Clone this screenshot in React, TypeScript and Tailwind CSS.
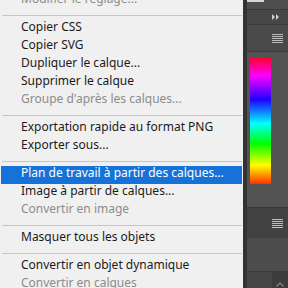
import React from 'react';

type Entry =
  | { kind: 'item'; label: string; disabled?: boolean; active?: boolean }
  | { kind: 'sep' };

const entries: Entry[] = [
  { kind: 'item', label: 'Modifier le réglage...', disabled: true },
  { kind: 'sep' },
  { kind: 'item', label: 'Copier CSS' },
  { kind: 'item', label: 'Copier SVG' },
  { kind: 'item', label: 'Dupliquer le calque...' },
  { kind: 'item', label: 'Supprimer le calque' },
  { kind: 'item', label: "Groupe d'après les calques...", disabled: true },
  { kind: 'sep' },
  { kind: 'item', label: 'Exportation rapide au format PNG' },
  { kind: 'item', label: 'Exporter sous...' },
  { kind: 'sep' },
  { kind: 'item', label: 'Plan de travail à partir des calques...', active: true },
  { kind: 'item', label: 'Image à partir de calques...' },
  { kind: 'item', label: 'Convertir en image', disabled: true },
  { kind: 'sep' },
  { kind: 'item', label: 'Masquer tous les objets' },
  { kind: 'sep' },
  { kind: 'item', label: 'Convertir en objet dynamique' },
  { kind: 'item', label: 'Convertir en calques', disabled: true },
];

function Hamburger() {
  return (
    <div className="flex flex-col gap-[1px] w-[11px]">
      <div className="h-px bg-[#bdbdbd]" />
      <div className="h-px bg-[#bdbdbd]" />
      <div className="h-px bg-[#bdbdbd]" />
      <div className="h-px bg-[#bdbdbd]" />
      <div className="h-px bg-[#bdbdbd]" />
    </div>
  );
}

export default function App() {
  return (
    <div
      className="flex w-[288px] h-[288px] overflow-hidden bg-[#535353]"
      style={{ fontFamily: '"Noto Sans", "Open Sans", sans-serif' }}
    >
      {/* Context menu */}
      <div className="w-[243px] shrink-0 bg-[#f0f0f0] px-[1px]">
        <div className="-mt-[8px]">
          {entries.map((e, i) =>
            e.kind === 'sep' ? (
              <div key={i} className="h-[10px] flex items-center pl-[1px]">
                <div className="w-full h-px bg-[#c6c6c6]" />
              </div>
            ) : (
              <div
                key={i}
                className={`h-[18px] pl-[20px] text-[12px] leading-[14px] whitespace-nowrap ${
                  e.active
                    ? 'bg-[#1672d8] text-white'
                    : e.disabled
                    ? 'text-[#8c8c8c]'
                    : 'text-[#1b1b1b]'
                }`}
              >
                {e.label}
              </div>
            )
          )}
        </div>
      </div>
      <div className="w-[4px] shrink-0 bg-[#333333]" />

      {/* Side panel */}
      <div className="flex-1 flex flex-col">
        <div className="h-[10px] bg-[#4e4e4e] border-b border-[#3a3a3a]">
          <div className="w-[17px] h-[2px] bg-[#d6d6d6]" />
        </div>
        <div className="h-[15px] bg-[#474747] border-b border-[#3b3b3b] flex items-center justify-end pr-[8px]">
          <svg width="8" height="6" viewBox="0 0 8 6">
            <path d="M0 0 L3 3 L0 6 Z M4 0 L7 3 L4 6 Z" fill="#cfcfcf" />
          </svg>
        </div>
        <div className="h-[27px] bg-[#4a4a4a] border-b border-[#3a3a3a] flex items-center justify-end pr-[5px]">
          <Hamburger />
        </div>
        <div className="h-[155px] bg-[#535353] pl-[3px] pt-[6px]">
          <div className="w-[21px] h-[126px] bg-[linear-gradient(to_bottom,#ff0030_0%,#ff00ff_14%,#2000ff_33%,#00ffff_52%,#00ff00_68%,#ffff00_85%,#ff3000_100%)]" />
        </div>
        <div className="h-[31px] bg-[#424242] border-t border-[#383838] flex items-center justify-end pr-[5px]">
          <Hamburger />
        </div>
        <div className="h-[34px] bg-[#4c4c4c] border-b border-[#3a3a3a]" />
        <div className="flex-1 flex bg-[#464646]">
          <div className="flex-1" />
          <div className="w-[16px] bg-[#3c3c3c] flex items-end justify-center pb-[1px]">
            <svg width="8" height="5" viewBox="0 0 8 5">
              <path d="M0.5 4.5 L4 1 L7.5 4.5" stroke="#8a8a8a" strokeWidth="1.2" fill="none" />
            </svg>
          </div>
        </div>
      </div>
    </div>
  );
}
